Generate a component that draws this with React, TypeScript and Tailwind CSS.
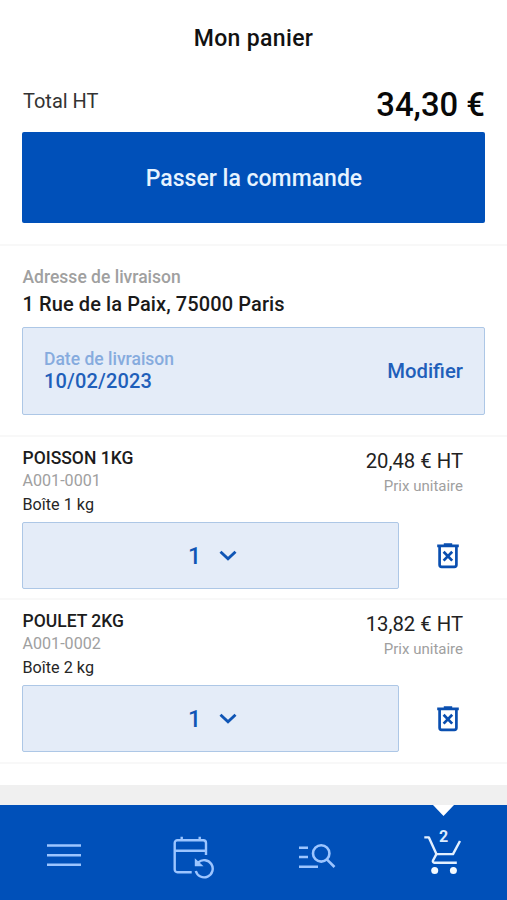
import React from 'react';

type Product = { name: string; ref: string; unit: string; price: string; quantity: number };

const products: Product[] = [
  { name: 'POISSON 1KG', ref: 'A001-0001', unit: 'Boîte 1 kg', price: '20,48 € HT', quantity: 1 },
  { name: 'POULET 2KG', ref: 'A001-0002', unit: 'Boîte 2 kg', price: '13,82 € HT', quantity: 1 },
];

function TrashIcon() {
  return (
    <svg width="24" height="28" viewBox="0 0 24 28" fill="none" stroke="#0a4fb0" strokeWidth="2.7">
      <path d="M1.2 3.9H22.8M7.8 2.5H16.2" />
      <path d="M3.6 4.5V22.8a2 2 0 0 0 2 2H18.4a2 2 0 0 0 2-2V4.5" />
      <path d="M7.6 9.8L16.2 18.6M16.2 9.8L7.6 18.6" />
    </svg>
  );
}

function ChevronIcon() {
  return (
    <svg width="18" height="12" viewBox="0 0 18 12" fill="none" stroke="#0f55b5" strokeWidth="2.9">
      <path d="M1.5 1.7L9 8.7L16.5 1.7" />
    </svg>
  );
}

function MenuIcon() {
  return (
    <svg width="36" height="26" viewBox="0 0 36 26" fill="none" stroke="#9cc5ff" strokeWidth="2.5">
      <path d="M1 3.6H35M1 13.2H35M1 22.8H35" />
    </svg>
  );
}

function HistoryIcon() {
  return (
    <svg width="42" height="44" viewBox="0 0 42 44" fill="none" stroke="#9cc5ff" strokeWidth="2.4">
      <path d="M18.7 37.3H4.4a2.7 2.7 0 0 1-2.7-2.7V7.9a2.7 2.7 0 0 1 2.7-2.7H30.3A2.7 2.7 0 0 1 33 7.9V20" />
      <path d="M1.7 15.7H33M8.7 1.8V5.5M26.7 1.8V5.5" />
      <path d="M25.3 27.4A8.6 8.6 0 1 1 22.8 36" />
      <path d="M22.4 24.5V30.6H29L22.4 24.5Z" fill="#9cc5ff" strokeWidth="1.2" />
    </svg>
  );
}

function SearchListIcon() {
  return (
    <svg width="38" height="28" viewBox="0 0 38 28" fill="none" stroke="#9cc5ff" strokeWidth="2.6">
      <path d="M1 4.7H10M1 14H10M1 23.7H20" />
      <circle cx="23.2" cy="10.4" r="8.2" />
      <path d="M28.8 16.3L36.5 24" />
    </svg>
  );
}

function CartIcon() {
  return (
    <svg width="38" height="42" viewBox="0 0 38 42" fill="none" stroke="#e3f0ff" strokeWidth="2.4">
      <path d="M0.3 3.4H4.9L12.4 20.1H29L36 7" strokeLinejoin="round" />
      <path d="M12.4 20.1L9 26.5a1.5 1.5 0 0 0 1.3 2.2H32.8" />
      <circle cx="10.7" cy="36.4" r="3.5" fill="#f4faff" stroke="none" />
      <circle cx="29.4" cy="36.4" r="3.5" fill="#f4faff" stroke="none" />
    </svg>
  );
}

function ProductRow({ product }: { product: Product }) {
  return (
    <article className="flex h-[163px] flex-col border-b-2 border-[#f8f8f8] px-[22px] pt-[9px] last:h-[164px]">
      <div className="flex h-[76px] justify-between pr-[22px]">
        <div className="flex flex-col pl-[0.5px]">
          <h2 className="h-[23px] text-[17.5px] leading-[24px] font-medium text-[#1c1c1c]">{product.name}</h2>
          <p className="h-[22px] text-[16.1px] leading-[23px] text-[#a0a0a0]">{product.ref}</p>
          <p className="h-[26px] text-[16.2px] leading-[27px] text-[#262626]">{product.unit}</p>
        </div>
        <div className="flex flex-col items-end pt-[2px]">
          <p className="h-[26px] text-[20.3px] leading-[26px] text-[#222222]">{product.price}</p>
          <p className="h-[24px] text-[15px] leading-[24px] text-[#a0a0a0]">Prix unitaire</p>
        </div>
      </div>
      <div className="flex items-center">
        <button className="flex h-[67px] w-[377px] items-center rounded-[2px] border border-[#adc7e6] bg-[#e4ecf8] pl-[165px]">
          <span className="pt-[3px] text-[23px] font-medium text-[#0f55b5]">{product.quantity}</span>
          <span className="ml-[18px]"><ChevronIcon /></span>
        </button>
        <button className="ml-[37px]"><TrashIcon /></button>
      </div>
    </article>
  );
}

export default function App() {
  return (
    <div className="flex h-[900px] w-[507px] flex-col overflow-hidden bg-white font-['Roboto',sans-serif]">
      <header className="flex h-[75px] items-center justify-center pt-[3px]">
        <h1 className="text-[23px] font-medium tracking-[0.35px] text-[#111111]">Mon panier</h1>
      </header>
      <section className="flex h-[171px] flex-col border-b-2 border-[#f8f8f8] px-[22px]">
        <div className="flex h-[57px] justify-between">
          <span className="pt-[11px] pl-[1px] text-[20px] leading-[31px] text-[#333333]">Total HT</span>
          <span className="pt-[10px] text-[32.8px] leading-[40px] font-medium text-[#080808]">34,30 €</span>
        </div>
        <button className="h-[91px] rounded-[2px] bg-[#0050b9] pt-[3px] pl-[1px] text-[23px] font-medium text-[#e6f3ff]">Passer la commande</button>
      </section>
      <section className="flex h-[191px] flex-col border-b-2 border-[#f8f8f8] px-[22px] pt-[17px]">
        <p className="h-[27px] pl-[0.5px] text-[17.5px] leading-[29px] font-medium text-[#a0a0a0]">Adresse de livraison</p>
        <p className="h-[37px] pl-[0.5px] text-[20px] leading-[29px] font-medium tracking-[0.1px] text-[#1a1a1a]">1 Rue de la Paix, 75000 Paris</p>
        <div className="flex h-[88px] items-center justify-between rounded-[2px] border border-[#adc7e6] bg-[#e4ecf8] px-[21px]">
          <div className="pb-[2px]">
            <p className="text-[17.5px] leading-[22px] font-medium text-[#86abde]">Date de livraison</p>
            <p className="text-[20px] leading-[22px] font-medium tracking-[0.15px] text-[#1f5fba]">10/02/2023</p>
          </div>
          <button className="text-[20.3px] font-medium text-[#1f5fba]">Modifier</button>
        </div>
      </section>
      <main className="h-[348px]">
        {products.map((product) => <ProductRow key={product.ref} product={product} />)}
      </main>
      <div className="h-[20px] bg-[#f0f0f0]" />
      <nav className="relative flex h-[95px] items-start bg-[#0050b9]">
        <button className="mt-[37px] ml-[46px]"><MenuIcon /></button>
        <button className="mt-[30px] ml-[91px]"><HistoryIcon /></button>
        <button className="mt-[38px] ml-[83px]"><SearchListIcon /></button>
        <button className="relative mt-[29px] ml-[88px]">
          <CartIcon />
          <span className="absolute top-[-6px] left-[15px] text-[16px] leading-[18px] font-bold text-[#dcecff]">2</span>
        </button>
        <svg className="absolute top-0 left-[433px]" width="22" height="11" viewBox="0 0 22 11">
          <path d="M0 0H21L10.5 11Z" fill="#ffffff" />
        </svg>
      </nav>
    </div>
  );
}
